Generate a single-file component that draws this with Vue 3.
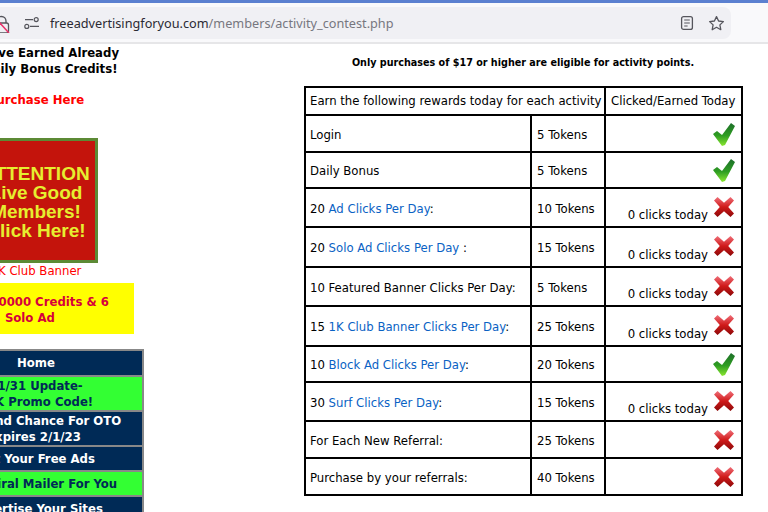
<script setup>
const heights = [37, 36, 39, 40, 39, 40, 36, 39, 37, 37]
const rows = [
  { pre: 'Login', tokens: '5 Tokens', ok: true },
  { pre: 'Daily Bonus', tokens: '5 Tokens', ok: true },
  { pre: '20 ', link: 'Ad Clicks Per Day', post: ':', tokens: '10 Tokens', ok: false, clicks: true },
  { pre: '20 ', link: 'Solo Ad Clicks Per Day', post: ' :', tokens: '15 Tokens', ok: false, clicks: true },
  { pre: '10 Featured Banner Clicks Per Day:', tokens: '5 Tokens', ok: false, clicks: true },
  { pre: '15 ', link: '1K Club Banner Clicks Per Day', post: ':', tokens: '25 Tokens', ok: false, clicks: true },
  { pre: '10 ', link: 'Block Ad Clicks Per Day', post: ':', tokens: '20 Tokens', ok: true },
  { pre: '30 ', link: 'Surf Clicks Per Day', post: ':', tokens: '15 Tokens', ok: false, clicks: true },
  { pre: 'For Each New Referral:', tokens: '25 Tokens', ok: false },
  { pre: 'Purchase by your referrals:', tokens: '40 Tokens', ok: false },
].map((r, i) => ({ ...r, h: heights[i] }))
const menu = [
  { t: ['Home'], c: 'navy', h: 24 },
  { t: ['01/31 Update-', '10K Promo Code!'], c: 'green', h: 33 },
  { t: ['A Second Chance For OTO', 'Expires 2/1/23\u00a0'], c: 'navy', h: 33 },
  { t: ['Get Your Free Ads'], c: 'navy', h: 23 },
  { t: ['Your Viral Mailer For You'], c: 'green', h: 23 },
  { t: ['Advertise Your Sites'], c: 'navy', h: 23 },
]
</script>

<template>
  <div class="page">
    <header class="chrome">
      <div class="accent"></div>
      <div class="toolbar">
        <div class="urlbar">
          <svg class="lock" width="12" height="20" viewBox="0 0 12 20">
            <path d="M-3 8a4.5 4.5 0 0 1 9 0v2" fill="none" stroke="#55555c" stroke-width="1.3"/>
            <rect x="-5" y="10" width="13.5" height="10" rx="2" fill="none" stroke="#55555c" stroke-width="1.3"/>
            <path d="M-2 8 9 20" stroke="#e8336a" stroke-width="1.5"/>
          </svg>
          <svg class="tune" width="16" height="14" viewBox="0 0 16 14">
            <circle cx="12.2" cy="3.6" r="2" fill="none" stroke="#55555c" stroke-width="1.2"/>
            <path d="M1 3.6h8M6 10.4h9" stroke="#55555c" stroke-width="1.2"/>
            <circle cx="2.8" cy="10.4" r="2" fill="none" stroke="#55555c" stroke-width="1.2"/>
          </svg>
          <div class="url"><span>freeadvertisingforyou.com</span><span class="dim">/members/activity_contest.php</span></div>
          <svg class="reader" width="14" height="16" viewBox="0 0 14 16">
            <rect x="1.6" y="1.6" width="10.8" height="12.8" rx="2" fill="none" stroke="#55555c" stroke-width="1.3"/>
            <path d="M4.2 5h5.6M4.2 8h5.6M4.2 11h3.4" stroke="#55555c" stroke-width="1.2"/>
          </svg>
          <svg class="star" width="17" height="17" viewBox="0 0 17 17">
            <path d="M8.5 1.6 10.6 6l4.8.6-3.5 3.3.9 4.8-4.3-2.4-4.3 2.4.9-4.8L1.6 6.6 6.4 6z" fill="none" stroke="#55555c" stroke-width="1.3" stroke-linejoin="round"/>
          </svg>
        </div>
      </div>
    </header>

    <div class="content">
      <aside class="side">
        <div class="earned">You Have Earned Already<br>100 Daily Bonus Credits!</div>
        <div class="purchase">Purchase Here</div>
        <div class="banner">ATTENTION<br>Live Good<br>Members!<br>Click Here!</div>
        <div class="club">1K Club Banner</div>
        <div class="promo">Get 10000 Credits &amp; 6<br>Solo Ad&nbsp;&nbsp;&nbsp;</div>
        <nav class="menu">
          <div v-for="(m, i) in menu" :key="i" class="item" :class="m.c" :style="{ height: m.h + 'px' }">
            <div v-for="l in m.t" :key="l">{{ l }}</div>
          </div>
        </nav>
      </aside>

      <main class="main">
        <p class="note">Only purchases of $17 or higher are eligible for activity points.</p>
        <table class="grid">
          <colgroup><col class="c1"><col class="c2"><col class="c3"></colgroup>
          <tbody>
            <tr class="head">
              <td colspan="2">Earn the following rewards today for each activity</td>
              <td>Clicked/Earned Today</td>
            </tr>
            <tr v-for="r in rows" :key="r.pre + r.tokens" class="row" :style="{ height: r.h + 'px' }">
              <td>{{ r.pre }}<a v-if="r.link">{{ r.link }}</a>{{ r.post }}</td>
              <td>{{ r.tokens }}</td>
              <td class="status" :class="{ 'has-clicks': r.clicks }">
                <span v-if="r.clicks" class="clicks">0 clicks today</span>
                <svg v-if="r.ok" class="mark" width="22" height="24" viewBox="0 0 22 24">
                  <defs><linearGradient id="gc" x1="0" y1="1" x2="0" y2="0"><stop offset="0" stop-color="#8be830"/><stop offset=".45" stop-color="#2f9e22"/><stop offset="1" stop-color="#1c6e2a"/></linearGradient></defs>
                  <path d="M0 12 4 9 9 13 18 1 22 4 12 23 9 24z" fill="url(#gc)"/>
                </svg>
                <svg v-else class="mark" width="22" height="22" viewBox="0 0 22 22">
                  <defs><linearGradient id="rc" x1="0" y1="0" x2="0" y2="1"><stop offset="0" stop-color="#f0707a"/><stop offset=".5" stop-color="#d01a1a"/><stop offset="1" stop-color="#8c0808"/></linearGradient></defs>
                  <path d="M1 4.5 4.5 1 11 6.8 17.5 1 21 4.5 15.2 11 21 17.5 17.5 21 11 15.2 4.5 21 1 17.5 6.8 11z" fill="url(#rc)"/>
                </svg>
              </td>
            </tr>
          </tbody>
        </table>
      </main>
    </div>
  </div>
</template>

<style>
html, body { margin: 0; background: #fff; overflow: hidden; }
</style>

<style scoped>
.page { width: 768px; height: 512px; overflow: hidden; font-family: "DejaVu Sans Condensed", "DejaVu Sans", sans-serif; font-stretch: condensed; color: #000; background: #fff; }
.accent { height: 3px; background: #5b80d0; }
.toolbar { height: 35px; padding-top: 4px; background: #f9f9fb; border-bottom: 2px solid #e6e6e8; }
.urlbar { height: 32px; width: 731px; background: #f0f0f4; border-radius: 0 8px 8px 0; display: flex; align-items: center; box-sizing: border-box; }
.lock { flex: none; }
.tune { margin-left: 12px; flex: none; }
.url { margin-left: 10px; font-family: "Noto Sans", sans-serif; font-stretch: normal; font-size: 12.7px; color: #2b2a33; flex: 1; white-space: nowrap; }
.dim { color: #77777f; }
.reader { margin-right: 14px; flex: none; }
.star { margin-right: 6px; flex: none; }
.content { display: flex; height: 468px; }
.side { flex: none; width: 216px; margin-left: -72px; text-align: center; font-weight: 700; font-size: 13px; line-height: 16px; white-space: nowrap; }
.earned { margin-top: 1px; }
.purchase { color: #f00; margin-top: 15px; }
.banner { width: 124px; height: 125px; box-sizing: border-box; margin: 30px auto 0; background: #c4140c; border: 3px solid #5c8a35; color: #e6ee30; font-family: "Liberation Sans", sans-serif; font-stretch: normal; font-size: 19px; line-height: 19px; padding-top: 23px; }
.club { color: #f00; font-weight: 400; }
.promo { width: 196px; height: 51px; margin: 4px auto 0; background: #ff0; color: #d6003c; padding-top: 11px; box-sizing: border-box; }
.menu { margin-top: 15px; border: 2px solid #888; border-bottom: 0; }
.item { border-bottom: 2px solid #888; box-sizing: content-box; display: flex; flex-direction: column; justify-content: center; }
.navy { background: #002a56; color: #fff; }
.green { background: #33ff33; color: #002a56; }
.main { flex: none; width: 460px; margin-left: 160px; }
.note { margin: 11px 0 0; font-weight: 700; font-size: 10.7px; line-height: 16px; text-align: center; width: 438px; }
.grid { border-collapse: collapse; table-layout: fixed; width: 437px; margin-top: 15px; font-size: 13px; line-height: 18px; }
.c1 { width: 226px; }
.c2 { width: 74px; }
.c3 { width: 137px; }
.grid td { border: 2px solid #000; padding: 0 5px; white-space: nowrap; }
.grid td:first-child { padding-left: 4px; }
.grid .row td { padding-top: 2px; }
.head { height: 28px; }
.grid a { color: #0a62c4; }
.grid .row .status { text-align: right; padding-top: 0; padding-right: 6px; }
.grid .row .has-clicks { padding-top: 5px; }
.clicks { margin-right: 5px; vertical-align: -9px; }
.mark { vertical-align: middle; }
</style>
